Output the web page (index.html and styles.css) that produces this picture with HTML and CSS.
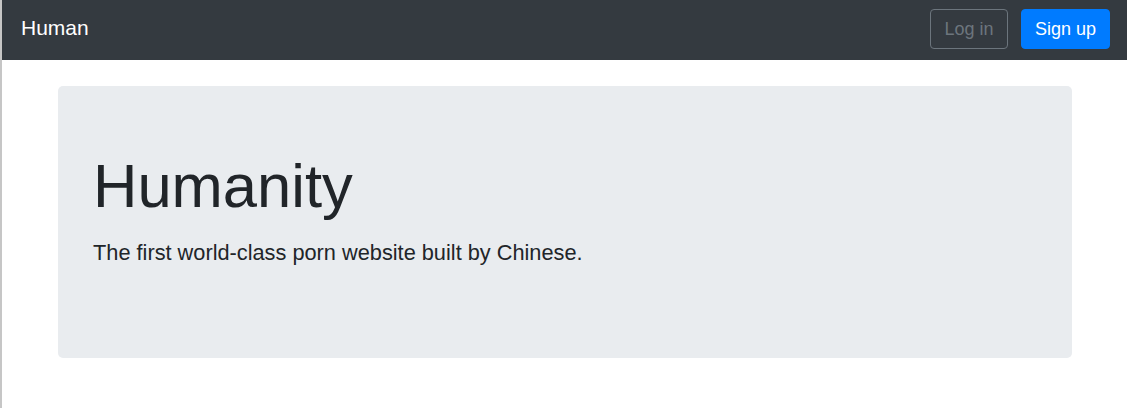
FILE: index.html
```html
<!DOCTYPE html>
<html lang="en">
<head>
<meta charset="utf-8">
<title>Human</title>
<link rel="stylesheet" href="styles.css">
</head>
<body>
<div class="page">
  <nav class="navbar">
    <a class="brand" href="#">Human</a>
    <div class="actions">
      <a class="btn btn-outline" href="#">Log in</a>
      <a class="btn btn-primary" href="#">Sign up</a>
    </div>
  </nav>
  <main class="container">
    <section class="jumbotron">
      <h1 class="display">Humanity</h1>
      <p class="lead">The first world-class porn website built by Chinese.</p>
    </section>
  </main>
</div>
</body>
</html>
```
FILE: styles.css
```css
html, body {
  margin: 0;
  padding: 0;
  height: 100%;
}
body {
  font-family: "Liberation Sans", Arial, sans-serif;
  color: #212529;
  background: #fff;
}
.page {
  min-height: 100%;
  border-left: 2px solid #c6c6c6;
  box-sizing: border-box;
}
.navbar {
  height: 60px;
  box-sizing: border-box;
  background: #343a40;
  display: flex;
  align-items: center;
  justify-content: space-between;
  padding: 0 17px 3px 19px;
}
.brand {
  color: #fff;
  text-decoration: none;
  font-size: 21px;
  line-height: 30px;
  margin-top: -1px;
}
.actions {
  display: flex;
  gap: 13px;
}
.btn {
  display: inline-block;
  font-size: 18px;
  line-height: 26px;
  padding: 6px 13.5px;
  border: 1px solid transparent;
  border-radius: 4px;
  text-decoration: none;
}
.btn-outline {
  color: #6c757d;
  border-color: #6c757d;
}
.btn-primary {
  color: #fff;
  background: #007bff;
  border-color: #007bff;
  padding: 6px 13px;
}
.container {
  padding: 26px 55px 0 56px;
}
.jumbotron {
  background: #e9ecef;
  border-radius: 5px;
  padding: 63px 35px 89px;
}
.display {
  margin: 0 0 14px;
  font-size: 61.5px;
  font-weight: 300;
  line-height: 74px;
}
.lead {
  margin: 0;
  font-size: 21.75px;
  line-height: 32px;
}
```
